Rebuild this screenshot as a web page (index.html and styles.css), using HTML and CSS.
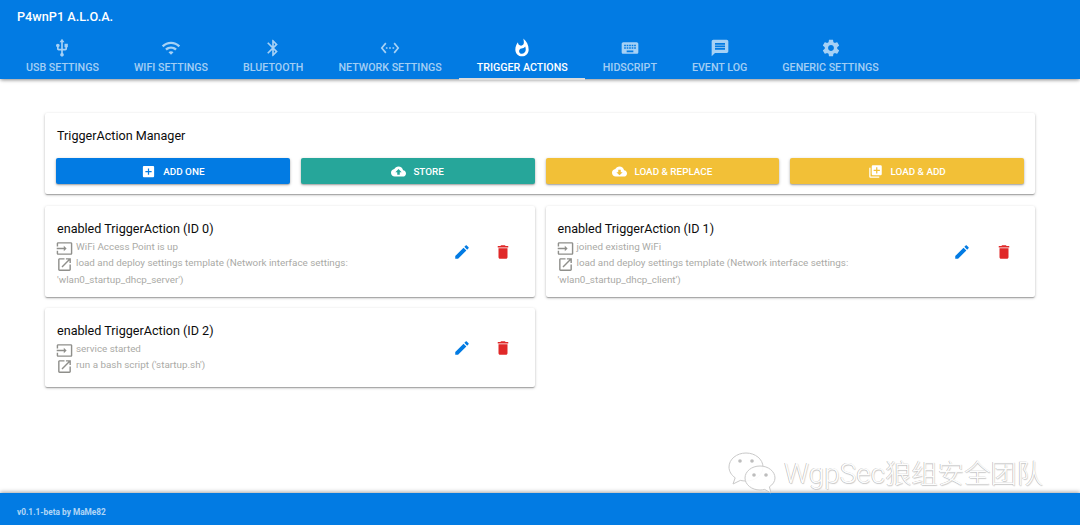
FILE: index.html
```html
<!DOCTYPE html>
<html lang="en">
<head>
<meta charset="utf-8">
<title>P4wnP1 A.L.O.A.</title>
<link rel="stylesheet" href="styles.css">
</head>
<body>
<svg class="defs" width="0" height="0" aria-hidden="true">
<symbol id="i-usb" viewBox="0 0 24 24"><path d="M15 7v4h1v2h-3V5h2l-3-4-3 4h2v8H8v-2.07c.7-.37 1.2-1.08 1.2-1.93 0-1.21-.99-2.2-2.2-2.2-1.21 0-2.2.99-2.2 2.2 0 .85.5 1.56 1.2 1.93V13c0 1.11.89 2 2 2h3v3.05c-.71.37-1.2 1.1-1.2 1.95 0 1.22.99 2.2 2.2 2.2 1.21 0 2.2-.98 2.2-2.2 0-.85-.49-1.58-1.2-1.95V15h3c1.11 0 2-.89 2-2v-2h1V7h-4z"/></symbol>
<symbol id="i-wifi" viewBox="0 0 24 24"><path d="M1 9l2 2c4.97-4.97 13.03-4.97 18 0l2-2C16.93 2.93 7.08 2.93 1 9zm8 8l3 3 3-3c-1.65-1.66-4.34-1.66-6 0zm-4-4l2 2c2.76-2.76 7.24-2.76 10 0l2-2C15.14 9.14 8.87 9.14 5 13z"/></symbol>
<symbol id="i-bt" viewBox="0 0 24 24"><path d="M17.71 7.71L12 2h-1v7.59L6.41 5 5 6.41 10.59 12 5 17.59 6.41 19 11 14.41V22h1l5.71-5.71-4.3-4.29 4.3-4.29zM13 5.83l1.88 1.88L13 9.59V5.83zm1.88 10.46L13 18.17v-3.76l1.88 1.88z"/></symbol>
<symbol id="i-eth" viewBox="0 0 24 24"><path d="M7.77 6.76L6.23 5.48.82 12l5.41 6.52 1.54-1.28L3.42 12l4.35-5.24zM7 13h2v-2H7v2zm10-2h-2v2h2v-2zm-6 2h2v-2h-2v2zm6.77-7.52l-1.54 1.28L20.58 12l-4.35 5.24 1.54 1.28L23.18 12l-5.41-6.52z"/></symbol>
<symbol id="i-fire" viewBox="0 0 24 24"><path d="M13.5.67s.74 2.65.74 4.8c0 2.06-1.35 3.73-3.41 3.73-2.07 0-3.63-1.67-3.63-3.73l.03-.36C5.21 7.51 4 10.62 4 14c0 4.42 3.58 8 8 8s8-3.58 8-8C20 8.61 17.41 3.8 13.5.67zM11.71 19c-1.78 0-3.22-1.4-3.22-3.14 0-1.62 1.05-2.76 2.81-3.12 1.77-.36 3.6-1.21 4.62-2.58.39 1.29.59 2.65.59 4.04 0 2.65-2.15 4.8-4.8 4.8z"/></symbol>
<symbol id="i-kbd" viewBox="0 0 24 24"><path d="M20 5H4c-1.1 0-1.99.9-1.99 2L2 17c0 1.1.9 2 2 2h16c1.1 0 2-.9 2-2V7c0-1.1-.9-2-2-2zm-9 3h2v2h-2V8zm0 3h2v2h-2v-2zM8 8h2v2H8V8zm0 3h2v2H8v-2zm-1 2H5v-2h2v2zm0-3H5V8h2v2zm9 7H8v-2h8v2zm0-4h-2v-2h2v2zm0-3h-2V8h2v2zm3 3h-2v-2h2v2zm0-3h-2V8h2v2z"/></symbol>
<symbol id="i-msg" viewBox="0 0 24 24"><path d="M20 2H4c-1.1 0-1.99.9-1.99 2L2 22l4-4h14c1.1 0 2-.9 2-2V4c0-1.1-.9-2-2-2zm-2 12H6v-2h12v2zm0-3H6V9h12v2zm0-3H6V6h12v2z"/></symbol>
<symbol id="i-gear" viewBox="0 0 24 24"><path d="M19.43 12.98c.04-.32.07-.64.07-.98s-.03-.66-.07-.98l2.11-1.65c.19-.15.24-.42.12-.64l-2-3.46c-.12-.22-.39-.3-.61-.22l-2.49 1c-.52-.4-1.08-.73-1.69-.98l-.38-2.65C14.46 2.18 14.25 2 14 2h-4c-.25 0-.46.18-.49.42l-.38 2.65c-.61.25-1.17.59-1.69.98l-2.49-1c-.23-.09-.49 0-.61.22l-2 3.46c-.13.22-.07.49.12.64l2.11 1.65c-.04.32-.07.65-.07.98s.03.66.07.98l-2.11 1.65c-.19.15-.24.42-.12.64l2 3.46c.12.22.39.3.61.22l2.49-1c.52.4 1.08.73 1.69.98l.38 2.65c.03.24.24.42.49.42h4c.25 0 .46-.18.49-.42l.38-2.65c.61-.25 1.17-.59 1.69-.98l2.49 1c.23.09.49 0 .61-.22l2-3.46c.12-.22.07-.49-.12-.64l-2.11-1.65zM12 15.5c-1.93 0-3.5-1.57-3.5-3.5s1.57-3.5 3.5-3.5 3.5 1.57 3.5 3.5-1.57 3.5-3.5 3.5z"/></symbol>
<symbol id="i-addbox" viewBox="0 0 24 24"><path d="M19 3H5c-1.11 0-2 .9-2 2v14c0 1.1.89 2 2 2h14c1.1 0 2-.9 2-2V5c0-1.1-.9-2-2-2zm-2 10h-4v4h-2v-4H7v-2h4V7h2v4h4v2z"/></symbol>
<symbol id="i-up" viewBox="0 0 24 24"><path d="M19.35 10.04C18.67 6.59 15.64 4 12 4 9.11 4 6.6 5.64 5.35 8.04 2.34 8.36 0 10.91 0 14c0 3.31 2.69 6 6 6h13c2.76 0 5-2.24 5-5 0-2.64-2.05-4.78-4.65-4.96zM14 13v4h-4v-4H7l5-5 5 5h-3z"/></symbol>
<symbol id="i-down" viewBox="0 0 24 24"><path d="M19.35 10.04C18.67 6.59 15.64 4 12 4 9.11 4 6.6 5.64 5.35 8.04 2.34 8.36 0 10.91 0 14c0 3.31 2.69 6 6 6h13c2.76 0 5-2.24 5-5 0-2.64-2.05-4.78-4.65-4.96zM17 13l-5 5-5-5h3V9h4v4h3z"/></symbol>
<symbol id="i-lib" viewBox="0 0 24 24"><path d="M4 6H2v14c0 1.1.9 2 2 2h14v-2H4V6zm16-4H8c-1.1 0-2 .9-2 2v12c0 1.1.9 2 2 2h12c1.1 0 2-.9 2-2V4c0-1.1-.9-2-2-2zm-1 9h-4v4h-2v-4H9V9h4V5h2v4h4v2z"/></symbol>
<symbol id="i-edit" viewBox="0 0 24 24"><path d="M3 17.25V21h3.75L17.81 9.94l-3.75-3.75L3 17.25zM20.71 7.04c.39-.39.39-1.02 0-1.41l-2.34-2.34c-.39-.39-1.02-.39-1.41 0l-1.83 1.83 3.75 3.75 1.83-1.83z"/></symbol>
<symbol id="i-del" viewBox="0 0 24 24"><path d="M6 19c0 1.1.9 2 2 2h8c1.1 0 2-.9 2-2V7H6v12zM19 4h-3.5l-1-1h-5l-1 1H5v2h14V4z"/></symbol>
<symbol id="i-input" viewBox="0 0 24 24"><path d="M21 3.01H3c-1.1 0-2 .9-2 2V9h2V4.99h18v14.03H3V15H1v4.01c0 1.1.9 1.98 2 1.98h18c1.1 0 2-.88 2-1.98v-14c0-1.11-.9-2-2-2zM11 16l4-4-4-4v3H1v2h10v3z"/></symbol>
<symbol id="i-open" viewBox="0 0 24 24"><path d="M19 19H5V5h7V3H5c-1.11 0-2 .9-2 2v14c0 1.1.89 2 2 2h14c1.1 0 2-.9 2-2v-7h-2v7zM14 3v2h3.59l-9.83 9.83 1.41 1.41L19 6.41V10h2V3h-7z"/></symbol>
</svg>

<header class="topbar">
  <div class="title">P4wnP1 A.L.O.A.</div>
  <nav class="tabs">
    <a class="tab"><svg class="tab-icon"><use href="#i-usb"/></svg><span>USB Settings</span></a>
    <a class="tab"><svg class="tab-icon"><use href="#i-wifi"/></svg><span>WiFi Settings</span></a>
    <a class="tab"><svg class="tab-icon"><use href="#i-bt"/></svg><span>Bluetooth</span></a>
    <a class="tab"><svg class="tab-icon"><use href="#i-eth"/></svg><span>Network Settings</span></a>
    <a class="tab active"><svg class="tab-icon"><use href="#i-fire"/></svg><span>Trigger Actions</span></a>
    <a class="tab"><svg class="tab-icon"><use href="#i-kbd"/></svg><span>HIDScript</span></a>
    <a class="tab"><svg class="tab-icon"><use href="#i-msg"/></svg><span>Event Log</span></a>
    <a class="tab"><svg class="tab-icon"><use href="#i-gear"/></svg><span>Generic Settings</span></a>
  </nav>
</header>

<main class="content">
  <section class="card manager">
    <h2 class="manager-title">TriggerAction Manager</h2>
    <div class="actions">
      <button class="btn blue"><svg class="btn-icon"><use href="#i-addbox"/></svg>Add One</button>
      <button class="btn teal"><svg class="btn-icon"><use href="#i-up"/></svg>Store</button>
      <button class="btn amber"><svg class="btn-icon"><use href="#i-down"/></svg>Load &amp; Replace</button>
      <button class="btn amber"><svg class="btn-icon"><use href="#i-lib"/></svg>Load &amp; Add</button>
    </div>
  </section>

  <div class="grid">
    <article class="card item">
      <div class="item-body">
        <h3 class="item-title">enabled TriggerAction (ID 0)</h3>
        <p class="line"><svg class="line-icon"><use href="#i-input"/></svg>WiFi Access Point is up</p>
        <p class="line"><svg class="line-icon"><use href="#i-open"/></svg>load and deploy settings template (Network interface settings: 'wlan0_startup_dhcp_server')</p>
      </div>
      <div class="item-tools">
        <svg class="tool edit"><use href="#i-edit"/></svg>
        <svg class="tool del"><use href="#i-del"/></svg>
      </div>
    </article>
    <article class="card item">
      <div class="item-body">
        <h3 class="item-title">enabled TriggerAction (ID 1)</h3>
        <p class="line"><svg class="line-icon"><use href="#i-input"/></svg>joined existing WiFi</p>
        <p class="line"><svg class="line-icon"><use href="#i-open"/></svg>load and deploy settings template (Network interface settings: 'wlan0_startup_dhcp_client')</p>
      </div>
      <div class="item-tools">
        <svg class="tool edit"><use href="#i-edit"/></svg>
        <svg class="tool del"><use href="#i-del"/></svg>
      </div>
    </article>
    <article class="card item short">
      <div class="item-body">
        <h3 class="item-title">enabled TriggerAction (ID 2)</h3>
        <p class="line"><svg class="line-icon"><use href="#i-input"/></svg>service started</p>
        <p class="line"><svg class="line-icon"><use href="#i-open"/></svg>run a bash script ('startup.sh')</p>
      </div>
      <div class="item-tools">
        <svg class="tool edit"><use href="#i-edit"/></svg>
        <svg class="tool del"><use href="#i-del"/></svg>
      </div>
    </article>
  </div>
</main>

<footer class="footer">v0.1.1-beta by MaMe82</footer>

<div class="watermark">
  <svg class="wechat" viewBox="0 0 52 46">
    <path class="bubble" d="M19 2C9.600 2 2 8.300 2 16c0 4.300 2.400 8.200 6.200 10.800L6 33l7.300-3.600c1.800.4 3.700.6 5.700.6 9.400 0 17-6.300 17-14S28.400 2 19 2z"/>
    <path class="bubble" d="M33 15c-8.300 0-15 5.400-15 12s6.700 12 15 12c1.600 0 3.200-.2 4.700-.6L44 42l-1.600-6.200C45.800 33.600 48 30.500 48 27c0-6.600-6.700-12-15-12z"/>
    <circle class="eye" cx="13" cy="10" r="1.800"/><circle class="eye" cx="25" cy="10" r="1.800"/>
    <circle class="eye" cx="27" cy="24" r="1.800"/><circle class="eye" cx="39" cy="24" r="1.800"/>
  </svg>
  <span class="wm-text"><span class="wm-latin">WgpSec</span>狼组安全团队</span>
</div>
</body>
</html>
```
FILE: styles.css
```css
* { box-sizing: border-box; }
html, body { margin: 0; height: 100%; }
body {
  display: flex;
  flex-direction: column;
  height: 525px;
  overflow: hidden;
  background: #fff;
  font-family: Roboto, "Noto Sans CJK SC", sans-serif;
  color: #0c0c0c;
}
.defs { position: absolute; }
svg { fill: currentColor; display: block; }

.topbar {
  height: 79px;
  flex: none;
  background: #027be3;
  color: #fff;
  box-shadow: 0 2px 4px -1px rgba(0,0,0,.3), 0 1px 3px rgba(0,0,0,.2);
  position: relative;
  z-index: 2;
}
.title {
  height: 36px;
  padding: 9px 17px 0;
  font-size: 12.700px;
  font-weight: 500;
  line-height: 15px;
}
.tabs { display: flex; padding-left: 8.500px; height: 43px; }
.tab {
  display: flex;
  flex-direction: column;
  align-items: center;
  padding: 2px 17.500px 0;
  height: 44px;
  margin-bottom: -1px;
  color: rgba(255,255,255,.65);
  font-size: 10.700px;
  font-weight: 500;
  text-transform: uppercase;
  border-bottom: 2px solid transparent;
}
.tab span { line-height: 15px; margin-top: 2px; white-space: nowrap; }
.tab-icon { width: 20px; height: 20px; flex: none; }
.tab.active { color: #fff; border-bottom-color: #dcdcdc; }

.content { flex: 1; padding: 34px 45px 0; display: flex; flex-direction: column; gap: 12px; }
.card {
  background: #fff;
  border-radius: 2px;
  box-shadow: 0 1px 3px rgba(0,0,0,.25), 0 1px 1px rgba(0,0,0,.12), 0 2px 1px -1px rgba(0,0,0,.12);
}
.manager { height: 81px; padding: 15px 11px 0; }
.manager-title { margin: 0 0 0 1px; font-size: 12.600px; font-weight: 400; line-height: 15px; }
.actions { display: grid; grid-template-columns: repeat(4, 1fr); gap: 11px; margin-top: 15px; }
.btn {
  height: 26px;
  border: 0;
  border-radius: 2px;
  padding: 0;
  display: flex;
  align-items: center;
  justify-content: center;
  gap: 7px;
  color: #fff;
  font-family: inherit;
  font-size: 9.900px;
  font-weight: 500;
  text-transform: uppercase;
  box-shadow: 0 1px 3px rgba(0,0,0,.3), 0 1px 1px rgba(0,0,0,.14);
}
.btn-icon { width: 15px; height: 15px; }
.blue { background: #027be3; }
.teal { background: #26a69a; }
.amber { background: #f2c037; }

.grid { display: grid; grid-template-columns: 1fr 1fr; gap: 11px; align-items: start; }
.item { display: flex; align-items: center; height: 91px; padding: 0 12px; }
.item.short { height: 79px; }
.item-body { width: 310px; flex: none; align-self: flex-start; margin-top: 14.500px; }
.item-title { margin: 0 0 3.250px; font-size: 12.600px; font-weight: 400; line-height: 15px; }
.line { margin: 0; font-size: 9.850px; line-height: 16.500px; color: #aaaaa6; }
.line-icon { display: inline-block; width: 17px; height: 17px; vertical-align: -5px; margin: -2px 3px -2px -1px; color: #8f8f8b; }
.item-tools { margin-left: auto; margin-right: 10.500px; display: flex; gap: 23.500px; }
.tool { width: 18px; height: 18px; }
.edit { color: #027be3; }
.del { color: #e02828; }

.footer {
  height: 32px;
  flex: none;
  background: #027be3;
  color: rgba(255,255,255,.7);
  font-size: 8.300px;
  font-weight: 700;
  line-height: 37px;
  padding: 1px 0 0 17px;
  box-shadow: 0 -1px 4px rgba(0,0,0,.35);
  position: relative;
}

.watermark {
  position: absolute;
  left: 727px;
  top: 451px;
  display: flex;
  align-items: center;
  gap: 5px;
}
.wechat { width: 52px; height: 46px; }
.bubble { fill: rgba(255,255,255,.9); stroke: #c9c9c9; stroke-width: 1; }
.eye { fill: #bdbdbd; }
.wm-text {
  font-size: 26.300px;
  font-weight: 300;
  line-height: 44px;
  color: #fdfdfd;
  text-shadow: -.5px -.5px 0 #b0b0b0, .5px .5px 1px #c8c8c8;
  white-space: nowrap;
}
.wm-latin { font-size: 28px; }
```
